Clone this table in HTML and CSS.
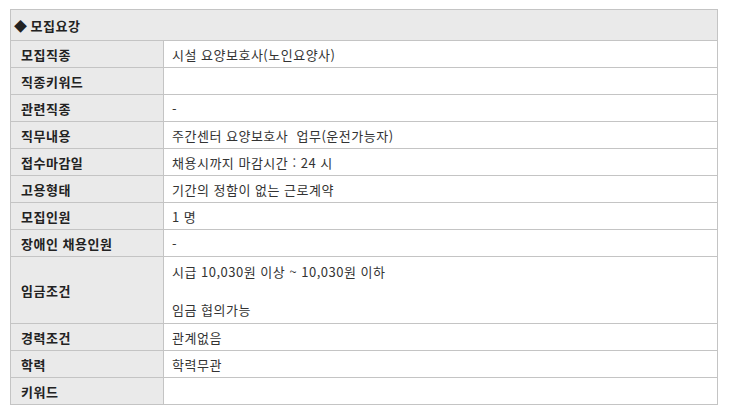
FILE: index.html
```html
<!DOCTYPE html>
<html lang="ko">
<head>
<meta charset="utf-8">
<title>모집요강</title>
<link rel="stylesheet" href="styles.css">
</head>
<body>
<section class="recruit">
  <h2 class="recruit-title"><span class="diamond">◆</span> 모집요강</h2>
  <dl class="recruit-grid">
    <dt>모집직종</dt><dd>시설 요양보호사(노인요양사)</dd>
    <dt>직종키워드</dt><dd></dd>
    <dt>관련직종</dt><dd>-</dd>
    <dt>직무내용</dt><dd>주간센터 요양보호사 &nbsp;업무(운전가능자)</dd>
    <dt>접수마감일</dt><dd>채용시까지 마감시간 : 24 시</dd>
    <dt>고용형태</dt><dd>기간의 정함이 없는 근로계약</dd>
    <dt>모집인원</dt><dd>1 명</dd>
    <dt>장애인 채용인원</dt><dd>-</dd>
    <dt class="tall">임금조건</dt><dd class="tall multi">시급 10,030원 이상 ~ 10,030원 이하<br><br>임금 협의가능</dd>
    <dt>경력조건</dt><dd>관계없음</dd>
    <dt>학력</dt><dd>학력무관</dd>
    <dt class="last">키워드</dt><dd class="last"></dd>
  </dl>
</section>
</body>
</html>
```

FILE: styles.css
```css
html, body {
  margin: 0;
  padding: 0;
  background: #ffffff;
}

body {
  padding: 9px 0 0 10px;
  font-family: "Noto Sans CJK KR", "Noto Sans", sans-serif;
  font-size: 13px;
  letter-spacing: 0.5px;
  color: #333333;
}

.recruit {
  width: 708px;
  box-sizing: border-box;
  border: 1px solid #c4c4c4;
}

.recruit-title {
  margin: 0;
  height: 30px;
  display: flex;
  align-items: center;
  padding-left: 3px;
  background: #eaeaea;
  border-bottom: 1px solid #c4c4c4;
  font-size: 13px;
  font-weight: bold;
  color: #222222;
}

.diamond {
  font-size: 13px;
  margin-right: 3px;
}

.recruit-grid {
  margin: 0;
  display: grid;
  grid-template-columns: 153px 1fr;
}

.recruit-grid dt,
.recruit-grid dd {
  margin: 0;
  height: 26px;
  display: flex;
  align-items: center;
  border-bottom: 1px solid #c4c4c4;
}

.recruit-grid dt {
  background: #eaeaea;
  border-right: 1px solid #c4c4c4;
  padding-left: 10px;
  font-weight: bold;
  color: #222222;
}

.recruit-grid dd {
  padding-left: 8px;
  color: #333333;
}

.recruit-grid .tall {
  height: 66px;
}

.recruit-grid .multi {
  line-height: 19px;
}

.recruit-grid .last {
  border-bottom: none;
}
```
